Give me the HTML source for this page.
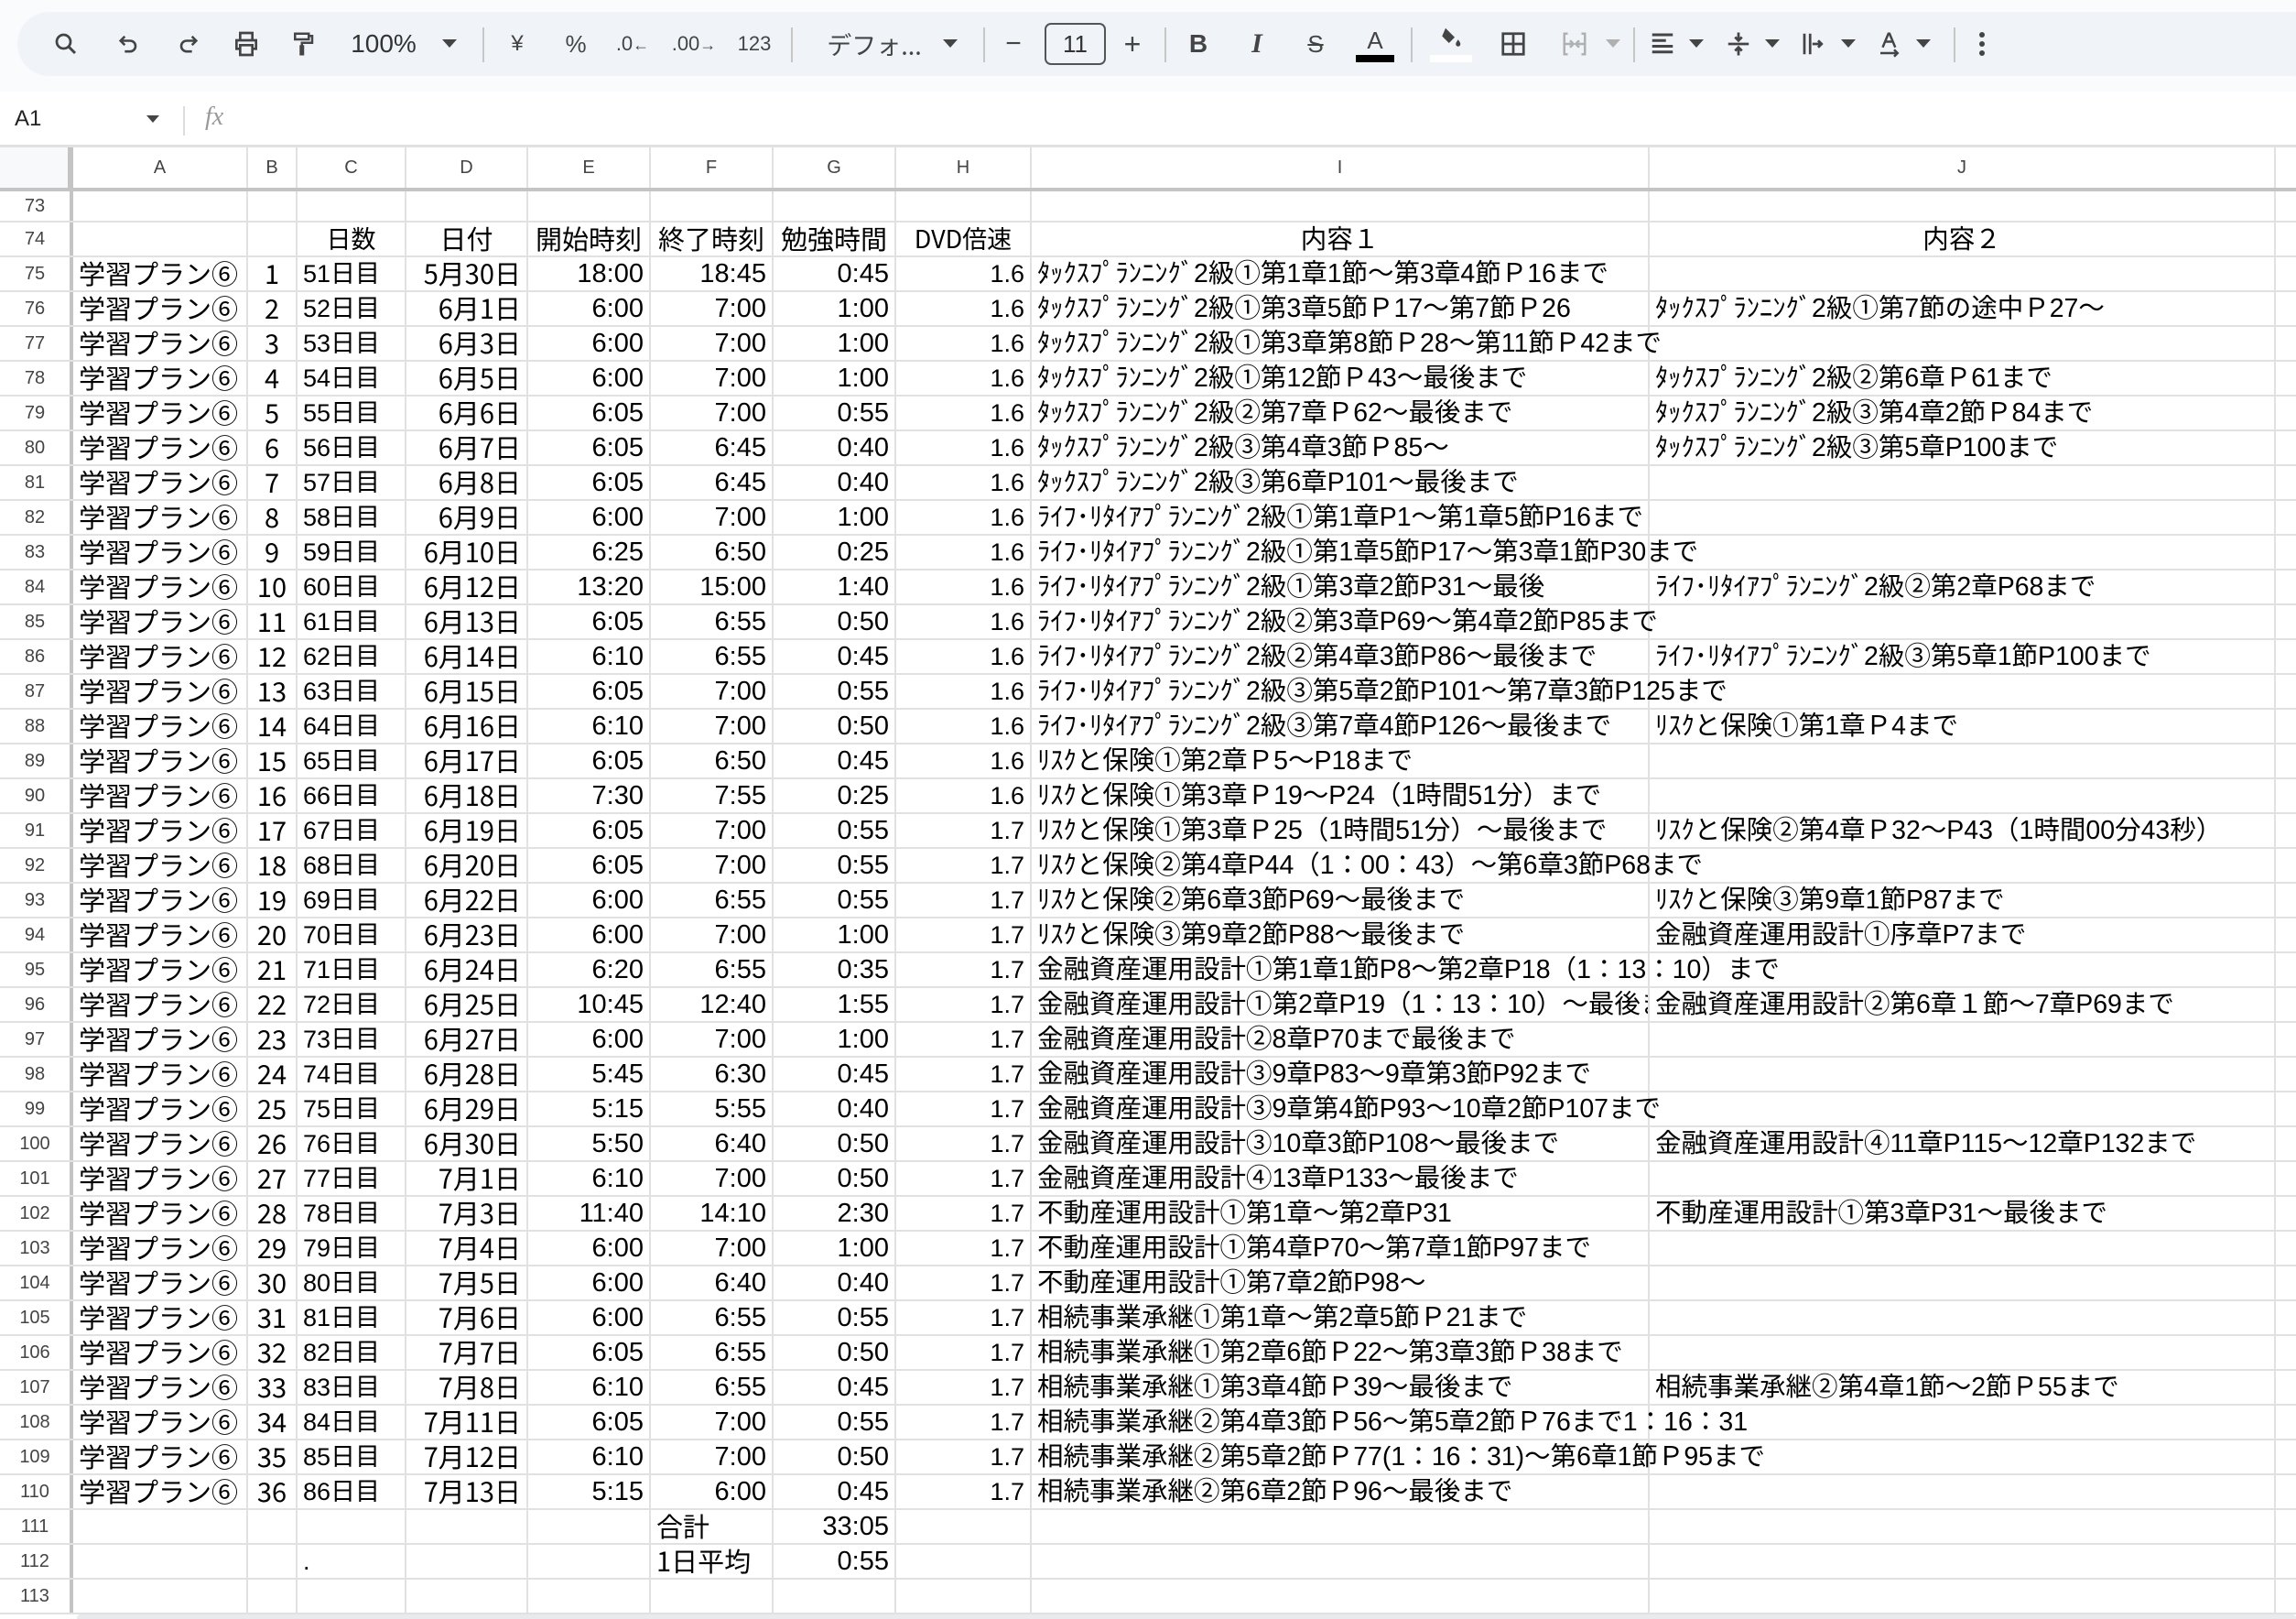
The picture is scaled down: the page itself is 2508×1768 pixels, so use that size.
<!DOCTYPE html>
<html><head><meta charset="utf-8">
<style>
*{margin:0;padding:0;box-sizing:border-box}
body{width:2508px;height:1768px;overflow:hidden;background:#fff;font-family:"Liberation Sans","Noto Sans CJK JP",sans-serif;color:#000;position:relative}
#top{position:absolute;left:0;top:0;width:2508px;height:100px;background:#f9fbfd}
#tb{position:absolute;left:19px;top:13px;width:2520px;height:70px;background:#f0f4f9;border-radius:35px}
.ic{position:absolute;top:48px;transform:translate(-50%,-50%);color:#444;font-size:28px;line-height:1;white-space:nowrap}
.dv{position:absolute;top:30px;width:2px;height:38px;background:#c7c7c7}
.ar{position:absolute;top:43px;width:0;height:0;border-left:8px solid transparent;border-right:8px solid transparent;border-top:9px solid #444}
#fb{position:absolute;left:0;top:106px;width:2508px;height:52px;background:#fff}
.grid{position:absolute;left:0;top:161px;width:2600px}
.r{display:flex;height:38px;border-bottom:2px solid #e1e1e1;white-space:nowrap}
.r>span{display:block;flex-shrink:0;height:100%;line-height:36px;font-size:29px;border-right:2px solid #e1e1e1;padding:0 6px;overflow:visible;position:relative}
.r>span:nth-child(1){width:80px;font-size:20px;color:#444;text-align:center;border-right:4px solid #c4c4c4;background:#fff}
.r>span:nth-child(2){width:191px;font-family:"Noto Sans CJK JP",sans-serif;line-height:34px}
.r>span:nth-child(3){width:54px;text-align:center;font-family:"Noto Sans CJK JP",sans-serif;line-height:34px;padding:0}
.r>span:nth-child(4){width:119px;font-size:27px}
.r>span:nth-child(5){width:133px;text-align:right;font-family:"Noto Sans CJK JP",sans-serif;line-height:34px}
.r>span:nth-child(6){width:134px;text-align:right}
.r>span:nth-child(7){width:134px;text-align:right}
.r>span:nth-child(8){width:134px;text-align:right}
.r>span:nth-child(9){width:148px;text-align:right;font-size:27px}
.r>span:nth-child(10){width:675px;font-size:28.5px;z-index:2}
.r>span:nth-child(11){width:684px;font-size:28.5px;background:#fff;z-index:3}
.r>span:nth-child(12){width:60px}
.hd{height:48px;border-bottom:4px solid #c4c4c4}
.hd>span{line-height:44px!important;font-size:20px!important;color:#444;text-align:center!important;font-family:"Liberation Sans",sans-serif!important}
.hd>span:nth-child(1){background:#f8f9fa;border-right:6px solid #c4c4c4}
.h74>span{text-align:center!important;font-family:"Noto Sans CJK JP",sans-serif!important;line-height:34px!important}
.h74>span:nth-child(1){font-family:"Liberation Sans",sans-serif!important;line-height:36px!important}
.r73{height:34px}
.r73>span{line-height:32px}
.c>span:nth-child(10){overflow:hidden}
</style></head><body>
<div id="top"></div>
<div id="tb"></div>
<svg class="ic" style="left:72px" width="30" height="30" viewBox="0 0 24 24"><circle cx="10" cy="10" r="6" fill="none" stroke="#444" stroke-width="2.2"/><path d="M14.5 14.5L20 20" stroke="#444" stroke-width="2.4"/></svg>
<svg class="ic" style="left:141px" width="28" height="28" viewBox="0 0 24 24"><path d="M8 5L4 9l4 4" fill="none" stroke="#444" stroke-width="2.2"/><path d="M4 9h9a5 5 0 010 10H8" fill="none" stroke="#444" stroke-width="2.2"/></svg>
<svg class="ic" style="left:205px" width="28" height="28" viewBox="0 0 24 24"><path d="M16 5l4 4-4 4" fill="none" stroke="#444" stroke-width="2.2"/><path d="M20 9h-9a5 5 0 000 10h5" fill="none" stroke="#444" stroke-width="2.2"/></svg>
<svg class="ic" style="left:269px" width="32" height="32" viewBox="0 0 24 24"><path d="M7 8V3h10v5M7 16H4V9h16v7h-3M7 13h10v8H7z" fill="none" stroke="#444" stroke-width="2"/></svg>
<svg class="ic" style="left:331px" width="30" height="32" viewBox="0 0 24 24"><path d="M5 3h12v5H5zM17 5h3v6h-9v3M10 14h2v7h-2z" fill="none" stroke="#444" stroke-width="2"/></svg>
<div class="ic" style="left:419px;color:#333">100%</div>
<div class="ar" style="left:483px"></div>
<div class="dv" style="left:527px"></div>
<div class="ic" style="left:565px;font-size:24px">¥</div>
<div class="ic" style="left:629px;font-size:26px">%</div>
<div class="ic" style="left:691px;font-size:22px">.0<span style="font-size:18px">←</span></div>
<div class="ic" style="left:758px;font-size:22px">.00<span style="font-size:18px">→</span></div>
<div class="ic" style="left:824px;font-size:22px">123</div>
<div class="dv" style="left:864px"></div>
<div class="ic" style="left:955px;font-size:27px;font-family:'Noto Sans CJK JP',sans-serif;color:#444">デフォ...</div>
<div class="ar" style="left:1030px"></div>
<div class="dv" style="left:1074px"></div>
<div class="ic" style="left:1107px;font-size:30px">−</div>
<div style="position:absolute;left:1141px;top:25px;width:67px;height:46px;border:2px solid #555;border-radius:7px;font-size:26px;text-align:center;line-height:42px;color:#333">11</div>
<div class="ic" style="left:1237px;font-size:32px">+</div>
<div class="dv" style="left:1272px"></div>
<div class="ic" style="left:1309px;font-weight:bold;font-size:28px">B</div>
<div class="ic" style="left:1373px;font-style:italic;font-size:30px;font-family:'Liberation Serif',serif;font-weight:bold">I</div>
<div class="ic" style="left:1437px;text-decoration:line-through;font-size:26px">S</div>
<div class="ic" style="left:1502px;top:44px;font-size:26px">A</div>
<div style="position:absolute;left:1481px;top:60px;width:42px;height:8px;background:#000"></div>
<div class="dv" style="left:1541px"></div>
<svg class="ic" style="left:1584px;top:42px" width="32" height="30" viewBox="0 0 24 24"><path d="M8 3l8 8-5 5-6-6z" fill="#444"/><path d="M19 13c1.5 2 2 3 2 4a2 2 0 01-4 0c0-1 .5-2 2-4z" fill="#444"/></svg>
<div style="position:absolute;left:1562px;top:60px;width:46px;height:8px;background:#fff"></div>
<svg class="ic" style="left:1653px" width="30" height="30" viewBox="0 0 24 24"><path d="M3 3h18v18H3zM12 3v18M3 12h18" fill="none" stroke="#444" stroke-width="2.2"/></svg>
<svg class="ic" style="left:1720px" width="30" height="30" viewBox="0 0 24 24"><path d="M6 3H3v18h3M18 3h3v18h-3M4 12h6M8 9l3 3-3 3M20 12h-6M16 9l-3 3 3 3" fill="none" stroke="#b0b0b0" stroke-width="2"/></svg>
<div class="ar" style="left:1754px;border-top-color:#b0b0b0"></div>
<div class="dv" style="left:1784px"></div>
<svg class="ic" style="left:1816px" width="30" height="30" viewBox="0 0 24 24"><path d="M3 4h18M3 9h12M3 14h18M3 19h18" stroke="#444" stroke-width="2.4"/></svg>
<div class="ar" style="left:1845px"></div>
<svg class="ic" style="left:1899px" width="30" height="30" viewBox="0 0 24 24"><path d="M3 12h18M12 2v7M9 6l3 3 3-3M12 22v-7M9 18l3-3 3 3" fill="none" stroke="#444" stroke-width="2.2"/></svg>
<div class="ar" style="left:1928px"></div>
<svg class="ic" style="left:1981px" width="30" height="30" viewBox="0 0 24 24"><path d="M4 3v18M9 3v18M11 12h8M16 9l3 3-3 3" fill="none" stroke="#444" stroke-width="2.2"/></svg>
<div class="ar" style="left:2011px"></div>
<svg class="ic" style="left:2064px" width="30" height="32" viewBox="0 0 24 24"><path d="M6 15L11 3h1l5 12M8 10h7M4 20h15M16 17l3 3-3 3" fill="none" stroke="#444" stroke-width="2"/></svg>
<div class="ar" style="left:2093px"></div>
<div class="dv" style="left:2134px"></div>
<svg class="ic" style="left:2165px" width="10" height="30" viewBox="0 0 6 24"><circle cx="3" cy="4" r="2.4" fill="#444"/><circle cx="3" cy="12" r="2.4" fill="#444"/><circle cx="3" cy="20" r="2.4" fill="#444"/></svg>

<div id="fb"></div>
<div style="position:absolute;left:16px;top:116px;font-size:24px;color:#222">A1</div>
<div class="ar" style="left:160px;top:126px;border-left-width:7px;border-right-width:7px;border-top-width:8px"></div>
<div style="position:absolute;left:200px;top:116px;width:2px;height:32px;background:#ddd"></div>
<div style="position:absolute;left:224px;top:112px;font-size:28px;font-style:italic;color:#999;font-family:'Liberation Serif',serif">fx</div>
<div style="position:absolute;left:0;top:158px;width:2508px;height:3px;background:#e1e1e1"></div>

<div class="grid">
<div class="r hd"><span></span><span>A</span><span>B</span><span>C</span><span>D</span><span>E</span><span>F</span><span>G</span><span>H</span><span>I</span><span>J</span><span></span></div>
<div class="r r73"><span>73</span><span></span><span></span><span></span><span></span><span></span><span></span><span></span><span></span><span></span><span></span><span></span></div>
<div class="r h74"><span>74</span><span></span><span></span><span>日数</span><span>日付</span><span>開始時刻</span><span>終了時刻</span><span>勉強時間</span><span>DVD倍速</span><span>内容１</span><span>内容２</span><span></span></div>
<div class="r"><span>75</span><span>学習プラン⑥</span><span>1</span><span>51日目</span><span>5月30日</span><span>18:00</span><span>18:45</span><span>0:45</span><span>1.6</span><span>ﾀｯｸｽﾌﾟﾗﾝﾆﾝｸﾞ2級①第1章1節～第3章4節Ｐ16まで</span><span></span><span></span></div>
<div class="r c"><span>76</span><span>学習プラン⑥</span><span>2</span><span>52日目</span><span>6月1日</span><span>6:00</span><span>7:00</span><span>1:00</span><span>1.6</span><span>ﾀｯｸｽﾌﾟﾗﾝﾆﾝｸﾞ2級①第3章5節Ｐ17～第7節Ｐ26</span><span>ﾀｯｸｽﾌﾟﾗﾝﾆﾝｸﾞ2級①第7節の途中Ｐ27～</span><span></span></div>
<div class="r"><span>77</span><span>学習プラン⑥</span><span>3</span><span>53日目</span><span>6月3日</span><span>6:00</span><span>7:00</span><span>1:00</span><span>1.6</span><span>ﾀｯｸｽﾌﾟﾗﾝﾆﾝｸﾞ2級①第3章第8節Ｐ28～第11節Ｐ42まで</span><span style="background:transparent"></span><span></span></div>
<div class="r c"><span>78</span><span>学習プラン⑥</span><span>4</span><span>54日目</span><span>6月5日</span><span>6:00</span><span>7:00</span><span>1:00</span><span>1.6</span><span>ﾀｯｸｽﾌﾟﾗﾝﾆﾝｸﾞ2級①第12節Ｐ43～最後まで</span><span>ﾀｯｸｽﾌﾟﾗﾝﾆﾝｸﾞ2級②第6章Ｐ61まで</span><span></span></div>
<div class="r c"><span>79</span><span>学習プラン⑥</span><span>5</span><span>55日目</span><span>6月6日</span><span>6:05</span><span>7:00</span><span>0:55</span><span>1.6</span><span>ﾀｯｸｽﾌﾟﾗﾝﾆﾝｸﾞ2級②第7章Ｐ62～最後まで</span><span>ﾀｯｸｽﾌﾟﾗﾝﾆﾝｸﾞ2級③第4章2節Ｐ84まで</span><span></span></div>
<div class="r c"><span>80</span><span>学習プラン⑥</span><span>6</span><span>56日目</span><span>6月7日</span><span>6:05</span><span>6:45</span><span>0:40</span><span>1.6</span><span>ﾀｯｸｽﾌﾟﾗﾝﾆﾝｸﾞ2級③第4章3節Ｐ85～</span><span>ﾀｯｸｽﾌﾟﾗﾝﾆﾝｸﾞ2級③第5章P100まで</span><span></span></div>
<div class="r"><span>81</span><span>学習プラン⑥</span><span>7</span><span>57日目</span><span>6月8日</span><span>6:05</span><span>6:45</span><span>0:40</span><span>1.6</span><span>ﾀｯｸｽﾌﾟﾗﾝﾆﾝｸﾞ2級③第6章P101～最後まで</span><span></span><span></span></div>
<div class="r"><span>82</span><span>学習プラン⑥</span><span>8</span><span>58日目</span><span>6月9日</span><span>6:00</span><span>7:00</span><span>1:00</span><span>1.6</span><span>ﾗｲﾌ･ﾘﾀｲｱﾌﾟﾗﾝﾆﾝｸﾞ2級①第1章P1～第1章5節P16まで</span><span></span><span></span></div>
<div class="r"><span>83</span><span>学習プラン⑥</span><span>9</span><span>59日目</span><span>6月10日</span><span>6:25</span><span>6:50</span><span>0:25</span><span>1.6</span><span>ﾗｲﾌ･ﾘﾀｲｱﾌﾟﾗﾝﾆﾝｸﾞ2級①第1章5節P17～第3章1節P30まで</span><span style="background:transparent"></span><span></span></div>
<div class="r c"><span>84</span><span>学習プラン⑥</span><span>10</span><span>60日目</span><span>6月12日</span><span>13:20</span><span>15:00</span><span>1:40</span><span>1.6</span><span>ﾗｲﾌ･ﾘﾀｲｱﾌﾟﾗﾝﾆﾝｸﾞ2級①第3章2節P31～最後</span><span>ﾗｲﾌ･ﾘﾀｲｱﾌﾟﾗﾝﾆﾝｸﾞ2級②第2章P68まで</span><span></span></div>
<div class="r"><span>85</span><span>学習プラン⑥</span><span>11</span><span>61日目</span><span>6月13日</span><span>6:05</span><span>6:55</span><span>0:50</span><span>1.6</span><span>ﾗｲﾌ･ﾘﾀｲｱﾌﾟﾗﾝﾆﾝｸﾞ2級②第3章P69～第4章2節P85まで</span><span style="background:transparent"></span><span></span></div>
<div class="r c"><span>86</span><span>学習プラン⑥</span><span>12</span><span>62日目</span><span>6月14日</span><span>6:10</span><span>6:55</span><span>0:45</span><span>1.6</span><span>ﾗｲﾌ･ﾘﾀｲｱﾌﾟﾗﾝﾆﾝｸﾞ2級②第4章3節P86～最後まで</span><span>ﾗｲﾌ･ﾘﾀｲｱﾌﾟﾗﾝﾆﾝｸﾞ2級③第5章1節P100まで</span><span></span></div>
<div class="r"><span>87</span><span>学習プラン⑥</span><span>13</span><span>63日目</span><span>6月15日</span><span>6:05</span><span>7:00</span><span>0:55</span><span>1.6</span><span>ﾗｲﾌ･ﾘﾀｲｱﾌﾟﾗﾝﾆﾝｸﾞ2級③第5章2節P101～第7章3節P125まで</span><span style="background:transparent"></span><span></span></div>
<div class="r c"><span>88</span><span>学習プラン⑥</span><span>14</span><span>64日目</span><span>6月16日</span><span>6:10</span><span>7:00</span><span>0:50</span><span>1.6</span><span>ﾗｲﾌ･ﾘﾀｲｱﾌﾟﾗﾝﾆﾝｸﾞ2級③第7章4節P126～最後まで</span><span>ﾘｽｸと保険①第1章Ｐ4まで</span><span></span></div>
<div class="r"><span>89</span><span>学習プラン⑥</span><span>15</span><span>65日目</span><span>6月17日</span><span>6:05</span><span>6:50</span><span>0:45</span><span>1.6</span><span>ﾘｽｸと保険①第2章Ｐ5～P18まで</span><span></span><span></span></div>
<div class="r"><span>90</span><span>学習プラン⑥</span><span>16</span><span>66日目</span><span>6月18日</span><span>7:30</span><span>7:55</span><span>0:25</span><span>1.6</span><span>ﾘｽｸと保険①第3章Ｐ19～P24（1時間51分）まで</span><span></span><span></span></div>
<div class="r c"><span>91</span><span>学習プラン⑥</span><span>17</span><span>67日目</span><span>6月19日</span><span>6:05</span><span>7:00</span><span>0:55</span><span>1.7</span><span>ﾘｽｸと保険①第3章Ｐ25（1時間51分）～最後まで</span><span>ﾘｽｸと保険②第4章Ｐ32～P43（1時間00分43秒）</span><span></span></div>
<div class="r"><span>92</span><span>学習プラン⑥</span><span>18</span><span>68日目</span><span>6月20日</span><span>6:05</span><span>7:00</span><span>0:55</span><span>1.7</span><span>ﾘｽｸと保険②第4章P44（1：00：43）～第6章3節P68まで</span><span style="background:transparent"></span><span></span></div>
<div class="r c"><span>93</span><span>学習プラン⑥</span><span>19</span><span>69日目</span><span>6月22日</span><span>6:00</span><span>6:55</span><span>0:55</span><span>1.7</span><span>ﾘｽｸと保険②第6章3節P69～最後まで</span><span>ﾘｽｸと保険③第9章1節P87まで</span><span></span></div>
<div class="r c"><span>94</span><span>学習プラン⑥</span><span>20</span><span>70日目</span><span>6月23日</span><span>6:00</span><span>7:00</span><span>1:00</span><span>1.7</span><span>ﾘｽｸと保険③第9章2節P88～最後まで</span><span>金融資産運用設計①序章P7まで</span><span></span></div>
<div class="r"><span>95</span><span>学習プラン⑥</span><span>21</span><span>71日目</span><span>6月24日</span><span>6:20</span><span>6:55</span><span>0:35</span><span>1.7</span><span>金融資産運用設計①第1章1節P8～第2章P18（1：13：10）まで</span><span style="background:transparent"></span><span></span></div>
<div class="r c"><span>96</span><span>学習プラン⑥</span><span>22</span><span>72日目</span><span>6月25日</span><span>10:45</span><span>12:40</span><span>1:55</span><span>1.7</span><span>金融資産運用設計①第2章P19（1：13：10）～最後まで</span><span>金融資産運用設計②第6章１節～7章P69まで</span><span></span></div>
<div class="r"><span>97</span><span>学習プラン⑥</span><span>23</span><span>73日目</span><span>6月27日</span><span>6:00</span><span>7:00</span><span>1:00</span><span>1.7</span><span>金融資産運用設計②8章P70まで最後まで</span><span></span><span></span></div>
<div class="r"><span>98</span><span>学習プラン⑥</span><span>24</span><span>74日目</span><span>6月28日</span><span>5:45</span><span>6:30</span><span>0:45</span><span>1.7</span><span>金融資産運用設計③9章P83～9章第3節P92まで</span><span></span><span></span></div>
<div class="r"><span>99</span><span>学習プラン⑥</span><span>25</span><span>75日目</span><span>6月29日</span><span>5:15</span><span>5:55</span><span>0:40</span><span>1.7</span><span>金融資産運用設計③9章第4節P93～10章2節P107まで</span><span style="background:transparent"></span><span></span></div>
<div class="r c"><span>100</span><span>学習プラン⑥</span><span>26</span><span>76日目</span><span>6月30日</span><span>5:50</span><span>6:40</span><span>0:50</span><span>1.7</span><span>金融資産運用設計③10章3節P108～最後まで</span><span>金融資産運用設計④11章P115～12章P132まで</span><span></span></div>
<div class="r"><span>101</span><span>学習プラン⑥</span><span>27</span><span>77日目</span><span>7月1日</span><span>6:10</span><span>7:00</span><span>0:50</span><span>1.7</span><span>金融資産運用設計④13章P133～最後まで</span><span></span><span></span></div>
<div class="r c"><span>102</span><span>学習プラン⑥</span><span>28</span><span>78日目</span><span>7月3日</span><span>11:40</span><span>14:10</span><span>2:30</span><span>1.7</span><span>不動産運用設計①第1章～第2章P31</span><span>不動産運用設計①第3章P31～最後まで</span><span></span></div>
<div class="r"><span>103</span><span>学習プラン⑥</span><span>29</span><span>79日目</span><span>7月4日</span><span>6:00</span><span>7:00</span><span>1:00</span><span>1.7</span><span>不動産運用設計①第4章P70～第7章1節P97まで</span><span></span><span></span></div>
<div class="r"><span>104</span><span>学習プラン⑥</span><span>30</span><span>80日目</span><span>7月5日</span><span>6:00</span><span>6:40</span><span>0:40</span><span>1.7</span><span>不動産運用設計①第7章2節P98～</span><span></span><span></span></div>
<div class="r"><span>105</span><span>学習プラン⑥</span><span>31</span><span>81日目</span><span>7月6日</span><span>6:00</span><span>6:55</span><span>0:55</span><span>1.7</span><span>相続事業承継①第1章～第2章5節Ｐ21まで</span><span></span><span></span></div>
<div class="r"><span>106</span><span>学習プラン⑥</span><span>32</span><span>82日目</span><span>7月7日</span><span>6:05</span><span>6:55</span><span>0:50</span><span>1.7</span><span>相続事業承継①第2章6節Ｐ22～第3章3節Ｐ38まで</span><span></span><span></span></div>
<div class="r c"><span>107</span><span>学習プラン⑥</span><span>33</span><span>83日目</span><span>7月8日</span><span>6:10</span><span>6:55</span><span>0:45</span><span>1.7</span><span>相続事業承継①第3章4節Ｐ39～最後まで</span><span>相続事業承継②第4章1節～2節Ｐ55まで</span><span></span></div>
<div class="r"><span>108</span><span>学習プラン⑥</span><span>34</span><span>84日目</span><span>7月11日</span><span>6:05</span><span>7:00</span><span>0:55</span><span>1.7</span><span>相続事業承継②第4章3節Ｐ56～第5章2節Ｐ76まで1：16：31</span><span style="background:transparent"></span><span></span></div>
<div class="r"><span>109</span><span>学習プラン⑥</span><span>35</span><span>85日目</span><span>7月12日</span><span>6:10</span><span>7:00</span><span>0:50</span><span>1.7</span><span>相続事業承継②第5章2節Ｐ77(1：16：31)～第6章1節Ｐ95まで</span><span style="background:transparent"></span><span></span></div>
<div class="r"><span>110</span><span>学習プラン⑥</span><span>36</span><span>86日目</span><span>7月13日</span><span>5:15</span><span>6:00</span><span>0:45</span><span>1.7</span><span>相続事業承継②第6章2節Ｐ96～最後まで</span><span></span><span></span></div>
<div class="r"><span>111</span><span></span><span></span><span></span><span></span><span></span><span style="text-align:left;font-family:'Noto Sans CJK JP',sans-serif;line-height:34px">合計</span><span>33:05</span><span></span><span></span><span></span><span></span></div>
<div class="r"><span>112</span><span></span><span></span><span>.</span><span></span><span></span><span style="text-align:left;font-family:'Noto Sans CJK JP',sans-serif;line-height:34px">1日平均</span><span>0:55</span><span></span><span></span><span></span><span></span></div>
<div class="r"><span>113</span><span></span><span></span><span></span><span></span><span></span><span></span><span></span><span></span><span></span><span></span><span></span></div>
</div>
<div style="position:absolute;left:84px;top:1763px;width:2424px;height:5px;background:#e8eaed;border-radius:4px 4px 0 0"></div>
</body></html>
